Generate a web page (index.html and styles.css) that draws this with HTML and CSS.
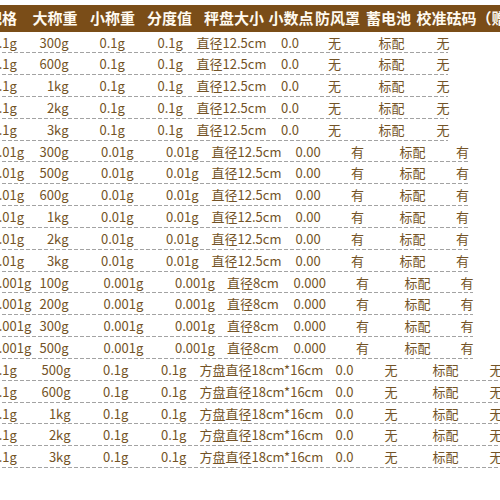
FILE: index.html
```html
<!DOCTYPE html>
<html lang="zh-CN">
<head>
<meta charset="utf-8">
<title>规格表</title>
<link rel="stylesheet" href="styles.css">
</head>
<body>
<div class="sheet">
  <div class="head">
    <div>规格</div><div>大称重</div><div>小称重</div><div>分度值</div><div>秤盘大小</div><div>小数点</div><div>防风罩</div><div>蓄电池</div><div>校准砝码（赠品）</div>
  </div>

  <div class="group g1">
    <div class="row"><div>0.1g</div><div class="cap">300g</div><div class="c3">0.1g</div><div>0.1g</div><div>直径12.5cm</div><div>0.0</div><div>无</div><div>标配</div><div>无</div></div>
    <div class="row"><div>0.1g</div><div class="cap">600g</div><div class="c3">0.1g</div><div>0.1g</div><div>直径12.5cm</div><div>0.0</div><div>无</div><div>标配</div><div>无</div></div>
    <div class="row"><div>0.1g</div><div class="cap">1kg</div><div class="c3">0.1g</div><div>0.1g</div><div>直径12.5cm</div><div>0.0</div><div>无</div><div>标配</div><div>无</div></div>
    <div class="row"><div>0.1g</div><div class="cap">2kg</div><div class="c3">0.1g</div><div>0.1g</div><div>直径12.5cm</div><div>0.0</div><div>无</div><div>标配</div><div>无</div></div>
    <div class="row"><div>0.1g</div><div class="cap">3kg</div><div class="c3">0.1g</div><div>0.1g</div><div>直径12.5cm</div><div>0.0</div><div>无</div><div>标配</div><div>无</div></div>
  </div>

  <div class="group g2">
    <div class="row"><div>0.01g</div><div class="cap">300g</div><div class="c3">0.01g</div><div>0.01g</div><div>直径12.5cm</div><div>0.00</div><div>有</div><div>标配</div><div>有</div></div>
    <div class="row"><div>0.01g</div><div class="cap">500g</div><div class="c3">0.01g</div><div>0.01g</div><div>直径12.5cm</div><div>0.00</div><div>有</div><div>标配</div><div>有</div></div>
    <div class="row"><div>0.01g</div><div class="cap">600g</div><div class="c3">0.01g</div><div>0.01g</div><div>直径12.5cm</div><div>0.00</div><div>有</div><div>标配</div><div>有</div></div>
    <div class="row"><div>0.01g</div><div class="cap">1kg</div><div class="c3">0.01g</div><div>0.01g</div><div>直径12.5cm</div><div>0.00</div><div>有</div><div>标配</div><div>有</div></div>
    <div class="row"><div>0.01g</div><div class="cap">2kg</div><div class="c3">0.01g</div><div>0.01g</div><div>直径12.5cm</div><div>0.00</div><div>有</div><div>标配</div><div>有</div></div>
    <div class="row"><div>0.01g</div><div class="cap">3kg</div><div class="c3">0.01g</div><div>0.01g</div><div>直径12.5cm</div><div>0.00</div><div>有</div><div>标配</div><div>有</div></div>
  </div>

  <div class="group g3">
    <div class="row"><div>0.001g</div><div class="cap">100g</div><div class="c3">0.001g</div><div>0.001g</div><div>直径8cm</div><div>0.000</div><div>有</div><div>标配</div><div>有</div></div>
    <div class="row"><div>0.001g</div><div class="cap">200g</div><div class="c3">0.001g</div><div>0.001g</div><div>直径8cm</div><div>0.000</div><div>有</div><div>标配</div><div>有</div></div>
    <div class="row"><div>0.001g</div><div class="cap">300g</div><div class="c3">0.001g</div><div>0.001g</div><div>直径8cm</div><div>0.000</div><div>有</div><div>标配</div><div>有</div></div>
    <div class="row"><div>0.001g</div><div class="cap">500g</div><div class="c3">0.001g</div><div>0.001g</div><div>直径8cm</div><div>0.000</div><div>有</div><div>标配</div><div>有</div></div>
  </div>

  <div class="group g4">
    <div class="row"><div>0.1g</div><div class="cap">500g</div><div class="c3">0.1g</div><div>0.1g</div><div>方盘直径18cm*16cm</div><div>0.0</div><div>无</div><div>标配</div><div>无</div></div>
    <div class="row"><div>0.1g</div><div class="cap">600g</div><div class="c3">0.1g</div><div>0.1g</div><div>方盘直径18cm*16cm</div><div>0.0</div><div>无</div><div>标配</div><div>无</div></div>
    <div class="row"><div>0.1g</div><div class="cap">1kg</div><div class="c3">0.1g</div><div>0.1g</div><div>方盘直径18cm*16cm</div><div>0.0</div><div>无</div><div>标配</div><div>无</div></div>
    <div class="row"><div>0.1g</div><div class="cap">2kg</div><div class="c3">0.1g</div><div>0.1g</div><div>方盘直径18cm*16cm</div><div>0.0</div><div>无</div><div>标配</div><div>无</div></div>
    <div class="row"><div>0.1g</div><div class="cap">3kg</div><div class="c3">0.1g</div><div>0.1g</div><div>方盘直径18cm*16cm</div><div>0.0</div><div>无</div><div>标配</div><div>无</div></div>
  </div>
</div>
</body>
</html>
```

FILE: styles.css
```css
html, body {
  margin: 0;
  padding: 0;
  background: #ffffff;
  overflow: hidden;
}

.sheet {
  width: 500px;
  height: 500px;
  overflow: hidden;
  font-family: "Noto Sans CJK SC", "Noto Sans", sans-serif;
  padding-top: 5px;
  box-sizing: border-box;
}

.head {
  display: grid;
  grid-template-columns: 45.5px 57.5px 57px 57px 64.5px 46.5px 51px 50.5px 120px;
  margin-left: -13px;
  height: 26.5px;
  line-height: 26.5px;
  background: #7a4d18;
  color: #fffaf0;
  font-size: 15px;
  font-weight: 700;
  white-space: nowrap;
  width: 550px;
}

.group {
  display: flex;
  flex-direction: column;
  margin-left: -8.5px;
}

.row {
  display: grid;
  height: 21.84px;
  line-height: 21.84px;
  font-size: 13px;
  color: #735326;
  white-space: nowrap;
  margin-left: -1.5px;
  background-image: linear-gradient(to right, #a3a3a3 0 4px, transparent 4px 6px);
  background-size: 6px 1px;
  background-repeat: repeat-x;
  background-position: 0 100%;
}

.row > div:first-child {
  padding-left: 1.5px;
}

.row .cap {
  text-align: right;
}

.row .c3 {
  padding-left: var(--p3);
}

.g1 { --p3: 31px; }
.g1 .row {
  width: 458px;
  grid-template-columns: 38.5px 40px 89px 39px 84.5px 47px 50.5px 58px 11.5px;
}

.g2 { --p3: 32.5px; }
.g2 .row {
  width: 478px;
  grid-template-columns: 38.5px 40px 97.5px 45.5px 84px 55.5px 48.5px 56.5px 12px;
}

.g3 { --p3: 35px; }
.g3 .row {
  width: 483px;
  grid-template-columns: 38.5px 40px 106.5px 52px 66.5px 62.5px 48.5px 56px 12.5px;
}

.g4 { --p3: 32.5px; }
.g4 .row {
  width: 530px;
  grid-template-columns: 40.5px 40px 90.5px 38.5px 136px 49px 48px 57px 30.5px;
}
```
